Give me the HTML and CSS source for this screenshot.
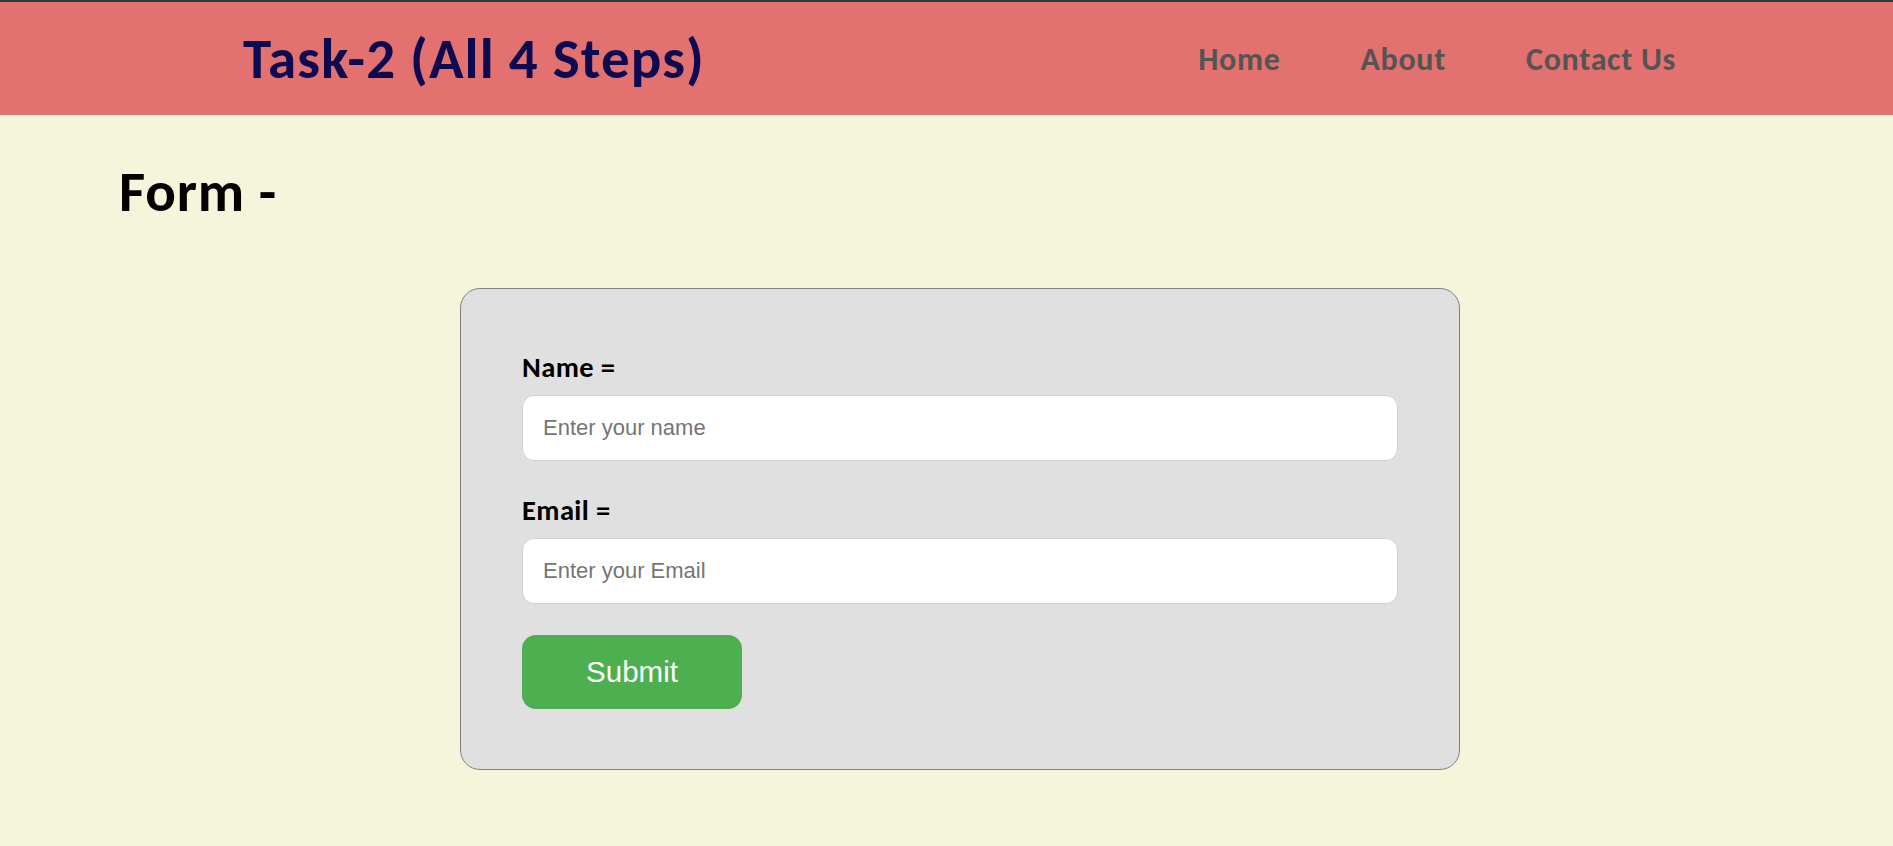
FILE: index.html
```html
<!DOCTYPE html>
<html lang="en">
<head>
<meta charset="utf-8">
<title>Task-2</title>
<link rel="stylesheet" href="styles.css">
</head>
<body>
<header class="site-header">
  <h1 class="site-title">Task-2 (All 4 Steps)</h1>
  <nav class="site-nav">
    <a class="nav-link" href="#">Home</a>
    <a class="nav-link" href="#">About</a>
    <a class="nav-link" href="#">Contact Us</a>
  </nav>
</header>
<main class="main">
  <h2 class="page-heading">Form -</h2>
  <form class="form-card">
    <label class="field-label" for="name">Name =</label>
    <input class="field-input" id="name" type="text" placeholder="Enter your name">
    <label class="field-label field-label-next" for="email">Email =</label>
    <input class="field-input" id="email" type="email" placeholder="Enter your Email">
    <button class="submit-btn" type="button">Submit</button>
  </form>
</main>
</body>
</html>
```

FILE: styles.css
```css
html, body {
  margin: 0;
  padding: 0;
}
body {
  background: #f5f5dc;
  font-family: Calibri, Carlito, Lato, "Noto Sans", sans-serif;
  min-height: 846px;
}
.site-header {
  box-sizing: border-box;
  height: 115px;
  border-top: 2px solid #2f3a33;
  background: #e27170;
  display: flex;
  align-items: center;
  justify-content: space-between;
  padding: 0 217px 0 243px;
}
.site-title {
  margin: 0;
  font-size: 57px;
  letter-spacing: 1.1px;
  font-weight: 700;
  line-height: 1;
  color: #0d0a52;
}
.site-nav {
  display: flex;
  gap: 80px;
  padding-top: 2px;
}
.nav-link {
  font-size: 32px;
  letter-spacing: 0.7px;
  font-weight: 700;
  color: #545454;
  text-decoration: none;
  line-height: 1;
}
.main {
  display: flex;
  flex-direction: column;
}
.page-heading {
  margin: 47px 0 0 0;
  padding-left: 119px;
  font-size: 57px;
  letter-spacing: 0.8px;
  line-height: 60px;
  font-weight: 700;
  color: #000;
}
.form-card {
  box-sizing: border-box;
  width: 1000px;
  margin: 66px 0 0 460px;
  padding: 63px 61px 60px;
  background: #e1e0e1;
  border: 1px solid #808080;
  border-radius: 20px;
  display: flex;
  flex-direction: column;
  align-items: flex-start;
}
.field-label {
  font-size: 28.5px;
  letter-spacing: 0.4px;
  line-height: 32px;
  font-weight: 700;
  color: #000;
  margin-bottom: 11px;
}
.field-label-next {
  margin-top: 34px;
}
.field-input {
  box-sizing: border-box;
  width: 100%;
  height: 66px;
  border: 1px solid #d0d0d0;
  border-radius: 12px;
  background: #fff;
  padding: 0 20px;
  font-family: "Liberation Sans", Arial, sans-serif;
  font-size: 22px;
  color: #222;
  outline: none;
}
.field-input::placeholder {
  color: #757575;
}
.submit-btn {
  margin-top: 31px;
  width: 220px;
  height: 74px;
  border: none;
  border-radius: 14px;
  background: #4caf50;
  color: #fff;
  font-family: "Liberation Sans", Arial, sans-serif;
  font-size: 29.5px;
  cursor: pointer;
}
```
